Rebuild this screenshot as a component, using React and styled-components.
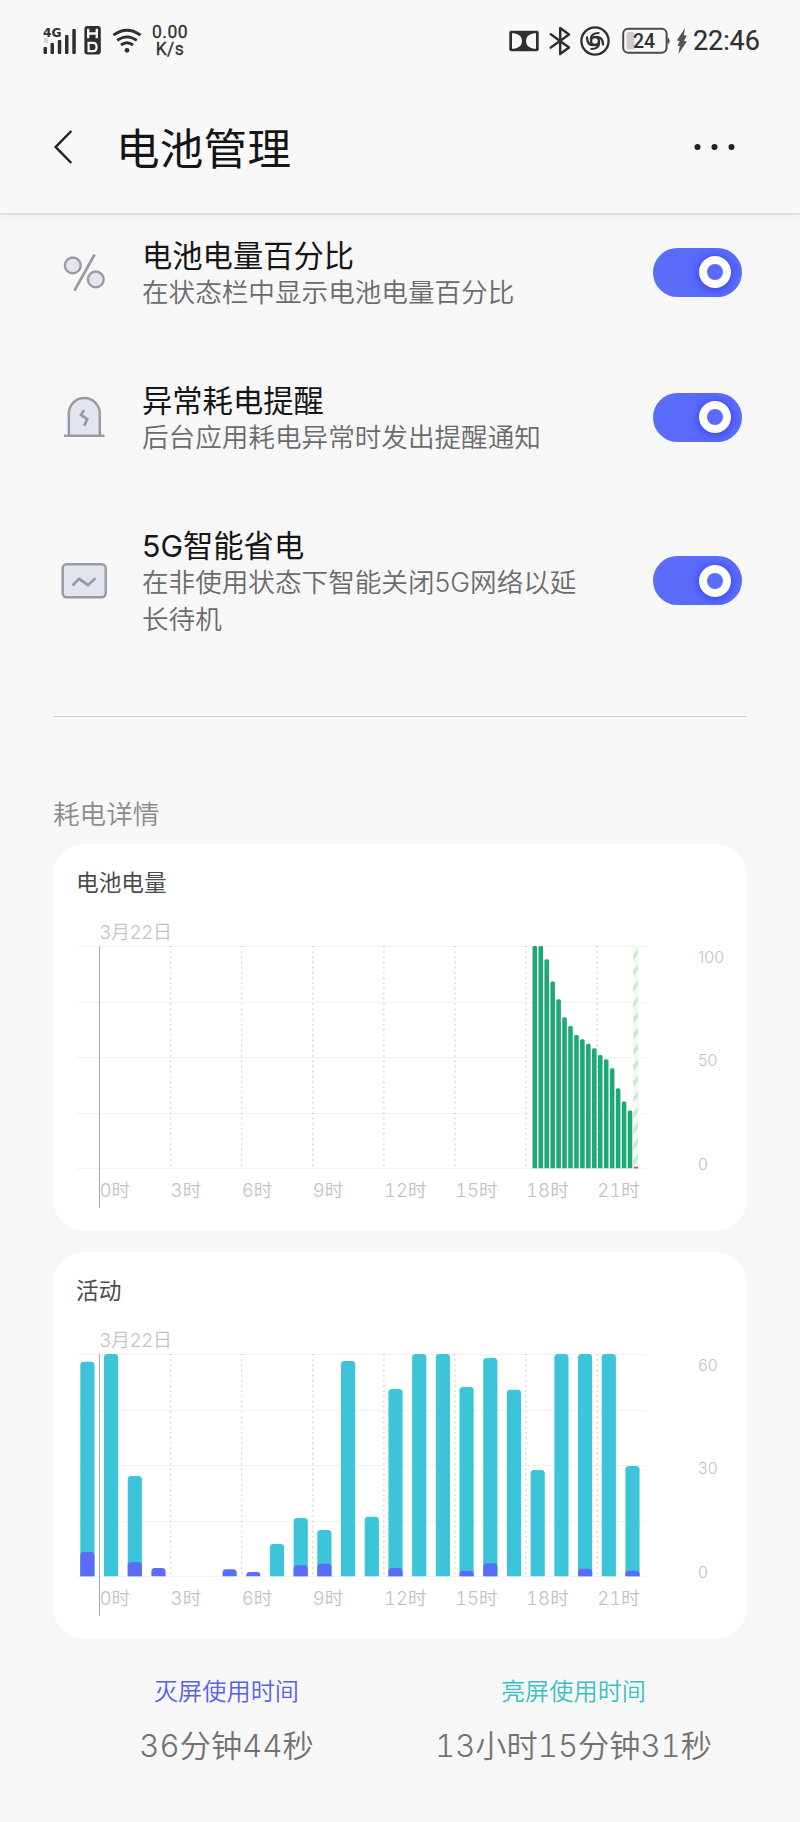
import React from 'react';
import styled, { createGlobalStyle } from 'styled-components';

const GlobalStyle = createGlobalStyle`
  * { box-sizing: border-box; }
  body {
    margin: 0;
    background: #f7f7f7;
    font-family: Inter, "Noto Sans CJK SC", sans-serif;
  }
  svg { display: block; overflow: visible; flex: none; }
`;

const Screen = styled.div`
  width: 800px;
  height: 1822px;
  overflow: hidden;
  background: #f7f7f7;
`;

const Header = styled.header`
  height: 215px;
  background: #f8f8f8;
  border-bottom: 2px solid #e2e2e2;
  box-shadow: 0 2px 8px rgba(0, 0, 0, 0.05);
`;

const StatusBar = styled.div`
  height: 82px;
  padding: 0 40px 0 43px;
  display: flex;
  align-items: center;
  justify-content: space-between;
  color: #2f2f2f;
  font-family: Roboto, sans-serif;
`;

const StatusGroup = styled.div`
  display: flex;
  align-items: center;
`;

const NetSpeed = styled.div`
  width: 38px;
  margin-left: 9px;
  font-size: 17.5px;
  font-weight: 400;
  line-height: 17px;
  text-align: center;
  letter-spacing: 0.5px;
  -webkit-text-stroke: 0.3px currentColor;
`;

const Clock = styled.span`
  width: 67px;
  margin-left: 5px;
  font-size: 27px;
  line-height: 32px;
  white-space: nowrap;
  letter-spacing: -0.1px;
  -webkit-text-stroke: 0.2px currentColor;
`;

const TitleBar = styled.div`
  height: 130px;
  padding: 0 64px 0 54px;
  display: flex;
  align-items: center;
`;

const PageTitle = styled.h1`
  flex: 1;
  margin: 3px 0 0 43px;
  font-size: 43.5px;
  font-weight: 400;
  line-height: 60px;
  letter-spacing: 0.3px;
  color: #151515;
`;

const Settings = styled.section`
  padding: 23px 58px 0 53px;
`;

const SettingRow = styled.div`
  height: ${(p) => p.$height}px;
  display: flex;
  align-items: flex-start;
`;

const SettingBody = styled.div`
  height: ${(p) => p.$height}px;
  flex: 1;
  display: flex;
  align-items: center;
`;

const IconSlot = styled.div`
  width: 89px;
  padding-left: 7px;
`;

const SettingText = styled.div`
  width: 450px;
  padding-top: 4px;
`;

const SettingTitle = styled.div`
  font-size: 30.3px;
  line-height: 36px;
  color: #161616;
`;

const SettingNote = styled.div`
  font-size: 26.6px;
  font-weight: 350;
  line-height: 37px;
  color: #6b6b6b;
`;

const Switch = styled.div`
  width: 89px;
  height: 49px;
  margin-left: auto;
  padding-right: 11px;
  border-radius: 25px;
  background: #5b6cfa;
  display: flex;
  align-items: center;
  justify-content: flex-end;
`;

const Knob = styled.div`
  width: 32px;
  height: 32px;
  border: 8px solid #fff;
  border-radius: 50%;
  background: #5b6cfa;
  box-shadow: 0 1px 8px 1px rgba(35, 35, 235, 0.6);
`;

const Divider = styled.hr`
  height: 1px;
  margin: 0 53px;
  border: 0;
  background: #d0d0d0;
`;

const SectionTitle = styled.h2`
  margin: 79px 0 0 53px;
  height: 48px;
  font-size: 26.6px;
  font-weight: 350;
  line-height: 37px;
  color: #8c8c8c;
`;

const Card = styled.section`
  height: 387px;
  margin: 0 53px 21px;
  padding-top: 24px;
  border-radius: 32px;
  background: #fff;
`;

const CardTitle = styled.h3`
  margin: 0 0 0 23px;
  height: 78px;
  font-size: 22.7px;
  font-weight: 400;
  line-height: 30px;
  color: #4c4c4c;
`;

const Totals = styled.section`
  margin: 0 53px;
  display: grid;
  grid-template-columns: 1fr 1fr;
  text-align: center;
`;

const TotalLabel = styled.div`
  margin-top: 14px;
  font-size: 24.2px;
  font-weight: 350;
  line-height: 36px;
  color: ${(p) => p.$color};
`;

const TotalValue = styled.div`
  margin-top: 14px;
  font-size: 31.2px;
  font-weight: 350;
  font-feature-settings: "tnum";
  line-height: 44px;
  color: #727272;
`;

const AxisText = styled.text`
  font-size: ${(p) => p.$size}px;
  font-weight: 350;
  font-feature-settings: ${(p) => (p.$tabular ? '"tnum"' : 'normal')};
  fill: #c2c2c2;
`;

const PLOT_HEIGHT = 222.3;
const HOURS = [0, 3, 6, 9, 12, 15, 18, 21];

function Chart({ scale, children }) {
  return (
    <svg width="694" height="262" viewBox="0 0 694 262">
      {[0, 1, 2, 3, 4].map((i) => (
        <rect key={i} x="23" y={Math.round((i * PLOT_HEIGHT) / 4)} width="571" height="1" fill="#f2f2f2" />
      ))}
      {HOURS.slice(1).map((h, i) => (
        <line key={h} x1={117.6 + i * 71.1} x2={117.6 + i * 71.1} y1="0" y2="221"
          stroke="#cfcfcf" strokeWidth="1.4" strokeDasharray="1.6 3.6" />
      ))}
      <AxisText x="46.5" y="-7.5" $size={18.9}>3月22日</AxisText>
      {HOURS.map((h, i) => (
        <AxisText key={h} x={46.5 + i * 71.1} y="251" $size={18.6} $tabular>{h}时</AxisText>
      ))}
      {scale.map((v, i) => (
        <AxisText key={v} x="645" y={16.5 + i * 103.6} $size={16}>{v}</AxisText>
      ))}
      {children}
      <rect x="46" y="0" width="1" height="262" fill="#aaa" />
    </svg>
  );
}

function Bar({ x, width, value, radius, fill }) {
  const y = PLOT_HEIGHT * (1 - value);
  const r = Math.min(radius, PLOT_HEIGHT - y);
  return (
    <path
      d={`M${x} ${PLOT_HEIGHT}V${y + r}q0 ${-r} ${r} ${-r}h${width - 2 * r}q${r} 0 ${r} ${r}V${PLOT_HEIGHT}z`}
      fill={fill}
    />
  );
}

const LEVELS = [100, 100, 94, 84, 76, 68, 64, 60, 58, 56, 54, 51, 49, 45, 36, 30, 26];

const ON_PIXELS = [
  644, 667, 301, 0, 0, 0, 0, 0, 97, 175, 139, 646,
  179, 562, 667, 667, 568, 655, 560, 319, 667, 667, 667, 331,
];
const OFF_PIXELS = [
  73, 0, 43, 25, 0, 0, 21, 13, 0, 33, 38, 0,
  0, 25, 0, 0, 17, 39, 0, 0, 0, 23, 0, 17,
];

function BatteryChart() {
  return (
    <Chart scale={[100, 50, 0]}>
      {LEVELS.map((v, i) => (
        <Bar key={i} x={479.5 + i * 5.95} width={4.6} value={v / 100} radius={1.5} fill="#1fa878" />
      ))}
      <rect x="580.3" y="0" width="5" height="221" fill="#edfbed" />
      {Array.from({ length: 14 }, (_, i) => (
        <path key={i} d={`M580.3 ${8.5 + i * 15.8}l4.600 -6v6l-4.600 6z`} fill="#cfe6d6" />
      ))}
      <rect x="580.6" y="220.8" width="4.6" height="1.6" rx="0.8" fill="#d8494f" />
    </Chart>
  );
}

function ActivityChart() {
  return (
    <Chart scale={[60, 30, 0]}>
      {ON_PIXELS.map((v, i) => v > 0 && (
        <Bar key={i} x={27.3 + i * 23.7} width={14.2} value={v / 667} radius={3.5} fill="#3cc5d8" />
      ))}
      {OFF_PIXELS.map((v, i) => v > 0 && (
        <Bar key={i} x={27.3 + i * 23.7} width={14.2} value={v / 667} radius={3.5} fill="#5b6cf8" />
      ))}
    </Chart>
  );
}

const SpacedSvg = styled.svg`
  margin-left: ${(p) => p.$gap}px;
`;

const SignalIcon = () => (
  <svg width="34" height="30" viewBox="0 0 34 30" fill="#2f2f2f">
    <text x="0" y="10.5" fontSize="12.5" fontWeight="700" fontFamily="DejaVu Sans" textLength="18.500" lengthAdjust="spacingAndGlyphs">4G</text>
    <rect x="0.5" y="21" width="3.5" height="7" rx="1" />
    <rect x="7.5" y="17" width="3.5" height="11" rx="1" />
    <rect x="14.8" y="14" width="3.5" height="14" rx="1" />
    <rect x="22" y="9" width="3.5" height="19" rx="1" />
    <rect x="29.3" y="3" width="3.5" height="25" rx="1" />
    <rect x="1" y="12" width="4" height="5" rx="1" fill="#d4d4d4" />
  </svg>
);

const HdIcon = () => (
  <SpacedSvg $gap={7} width="17" height="30" viewBox="0 0 17 30">
    <rect x="0.4" y="0" width="16.4" height="28.6" rx="3" fill="#2f2f2f" />
    <path d="M4.200 2.7v9.600M12.800 2.7v9.600M4 7.5h9" stroke="#f8f8f8" strokeWidth="2.4" fill="none" />
    <path d="M4.6 16.8h4.4q3.6 0 3.6 4.2t-3.6 4.2h-4.4z" stroke="#f8f8f8" strokeWidth="2.2" fill="none" />
  </SpacedSvg>
);

const WifiIcon = () => (
  <SpacedSvg $gap={11} width="30" height="30" viewBox="0 0 30 30" fill="none" stroke="#2f2f2f" strokeWidth="2.8">
    <path d="M1.4 9.2Q15 -0.8 28.6 9.2M5.2 14.4Q15 7.3 24.8 14.4M9 19Q15 14.6 21 19" />
    <circle cx="15" cy="24.3" r="2.4" fill="#2f2f2f" stroke="none" />
  </SpacedSvg>
);

const DolbyIcon = () => (
  <svg width="30" height="22" viewBox="0 0 30 22">
    <rect x="0.3" y="0.7" width="29.4" height="20.6" rx="2" fill="#2f2f2f" />
    <path d="M3 3.3H5Q13 4.500 13 11T5 18.700H3zM27 3.3H25Q17 4.500 17 11t8 7.700h2z" fill="#f8f8f8" />
  </svg>
);

const BluetoothIcon = () => (
  <SpacedSvg $gap={10} width="22" height="30" viewBox="0 0 22 30" fill="none" stroke="#2f2f2f" strokeWidth="2.5" strokeLinejoin="round" strokeLinecap="round">
    <path d="M1.8 8.2 20 21.6 11.2 28V2L20 8.6 1.8 21.6" />
  </SpacedSvg>
);

const SwirlIcon = () => (
  <SpacedSvg $gap={9} width="30" height="30" viewBox="0 0 30 30" fill="none" stroke="#2f2f2f">
    <circle cx="15" cy="15" r="13.600" strokeWidth="2.3" />
    <circle cx="15" cy="15" r="4" strokeWidth="2.4" />
    {[0, 90, 180, 270].map((a) => (
      <path key={a} d="M10.800 13Q11.200 7 18.600 7" strokeWidth="2.200" strokeLinecap="round" transform={`rotate(${a} 15 15)`} />
    ))}
  </SpacedSvg>
);

const BatteryIcon = () => (
  <SpacedSvg $gap={12} width="48" height="28" viewBox="0 0 48 28">
    <rect x="1.2" y="1.8" width="43.4" height="24" rx="5" fill="none" stroke="#4a4a4a" strokeWidth="2" />
    <path d="M45.5 10.3q2.2 1 2.2 3.6t-2.2 3.6z" fill="#4a4a4a" />
    <rect x="4.5" y="5" width="8" height="17.6" rx="2" fill="#cbcbcb" />
    <text x="22" y="20.8" fontSize="19.5" fontWeight="500" textAnchor="middle" fill="#2f2f2f">24</text>
  </SpacedSvg>
);

const ChargeIcon = () => (
  <SpacedSvg $gap={6} width="12" height="26" viewBox="0 0 12 26">
    <path d="M9 0 .8 12.5l3 .6-2.4 5 2.4-.1L2.3 26 11 13.5l-3-.6 2.8-5.5-3-.1z" fill="#555" />
  </SpacedSvg>
);

const BackIcon = () => (
  <svg width="19" height="34" viewBox="0 0 19 34" fill="none" stroke="#222" strokeWidth="2.5">
    <path d="M17.3 1 1.7 17l15.6 16" />
  </svg>
);

const MoreIcon = () => (
  <svg width="42" height="8" viewBox="0 0 42 8" fill="#222">
    <circle cx="3.500" cy="4" r="3" /><circle cx="20.500" cy="4" r="3" /><circle cx="37.500" cy="4" r="3" />
  </svg>
);

const PercentIcon = () => (
  <svg width="48" height="48" viewBox="0 0 48 48" fill="#e2e4ee" stroke="#9a9aa5" strokeWidth="2.4">
    <circle cx="12.8" cy="17.4" r="7.900" /><circle cx="35.8" cy="31.4" r="7.900" />
    <path d="M34.6 6.6 14.4 42.6" strokeWidth="2.8" />
  </svg>
);

const AlarmIcon = () => (
  <svg width="48" height="48" viewBox="0 0 48 48" fill="#e2e4ee" stroke="#9a9aa5" strokeWidth="2.5">
    <path d="M8.8 42V20.5a15.5 15.5 0 0 1 31 0V42" />
    <path d="M4 42.8h40.5" />
    <path d="M24 17.2l-3 4.6 6.2 4.400-3 6.600" fill="none" strokeWidth="2.800" />
  </svg>
);

const PulseIcon = () => (
  <svg width="48" height="48" viewBox="0 0 48 48" fill="#e2e4ee" stroke="#9a9aa5" strokeWidth="2.500">
    <rect x="2.700" y="7.300" width="43" height="33" rx="4" />
    <path d="M12.500 28.500 19 21.800l9 6.200 7.500-6.800" fill="none" strokeWidth="2.800" />
  </svg>
);

const SETTINGS = [
  { Icon: PercentIcon, title: '电池电量百分比', note: '在状态栏中显示电池电量百分比', body: 68, height: 145 },
  { Icon: AlarmIcon, title: '异常耗电提醒', note: '后台应用耗电异常时发出提醒通知', body: 68, height: 145 },
  { Icon: PulseIcon, title: '5G智能省电', note: '在非使用状态下智能关闭5G网络以延长待机', body: 105, height: 188 },
];

export default function App() {
  return (
    <Screen>
      <GlobalStyle />
      <Header>
        <StatusBar>
          <StatusGroup>
            <SignalIcon />
            <HdIcon />
            <WifiIcon />
            <NetSpeed>0.00<br />K/s</NetSpeed>
          </StatusGroup>
          <StatusGroup>
            <DolbyIcon />
            <BluetoothIcon />
            <SwirlIcon />
            <BatteryIcon />
            <ChargeIcon />
            <Clock>22:46</Clock>
          </StatusGroup>
        </StatusBar>
        <TitleBar>
          <BackIcon />
          <PageTitle>电池管理</PageTitle>
          <MoreIcon />
        </TitleBar>
      </Header>
      <Settings>
        {SETTINGS.map(({ Icon, title, note, body, height }) => (
          <SettingRow key={title} $height={height}>
            <SettingBody $height={body}>
              <IconSlot><Icon /></IconSlot>
              <SettingText>
                <SettingTitle>{title}</SettingTitle>
                <SettingNote>{note}</SettingNote>
              </SettingText>
              <Switch><Knob /></Switch>
            </SettingBody>
          </SettingRow>
        ))}
      </Settings>
      <Divider />
      <SectionTitle>耗电详情</SectionTitle>
      <Card>
        <CardTitle>电池电量</CardTitle>
        <BatteryChart />
      </Card>
      <Card>
        <CardTitle>活动</CardTitle>
        <ActivityChart />
      </Card>
      <Totals>
        <div>
          <TotalLabel $color="#5a5fe6">灭屏使用时间</TotalLabel>
          <TotalValue>36分钟44秒</TotalValue>
        </div>
        <div>
          <TotalLabel $color="#3bbfc6">亮屏使用时间</TotalLabel>
          <TotalValue>13小时15分钟31秒</TotalValue>
        </div>
      </Totals>
    </Screen>
  );
}
